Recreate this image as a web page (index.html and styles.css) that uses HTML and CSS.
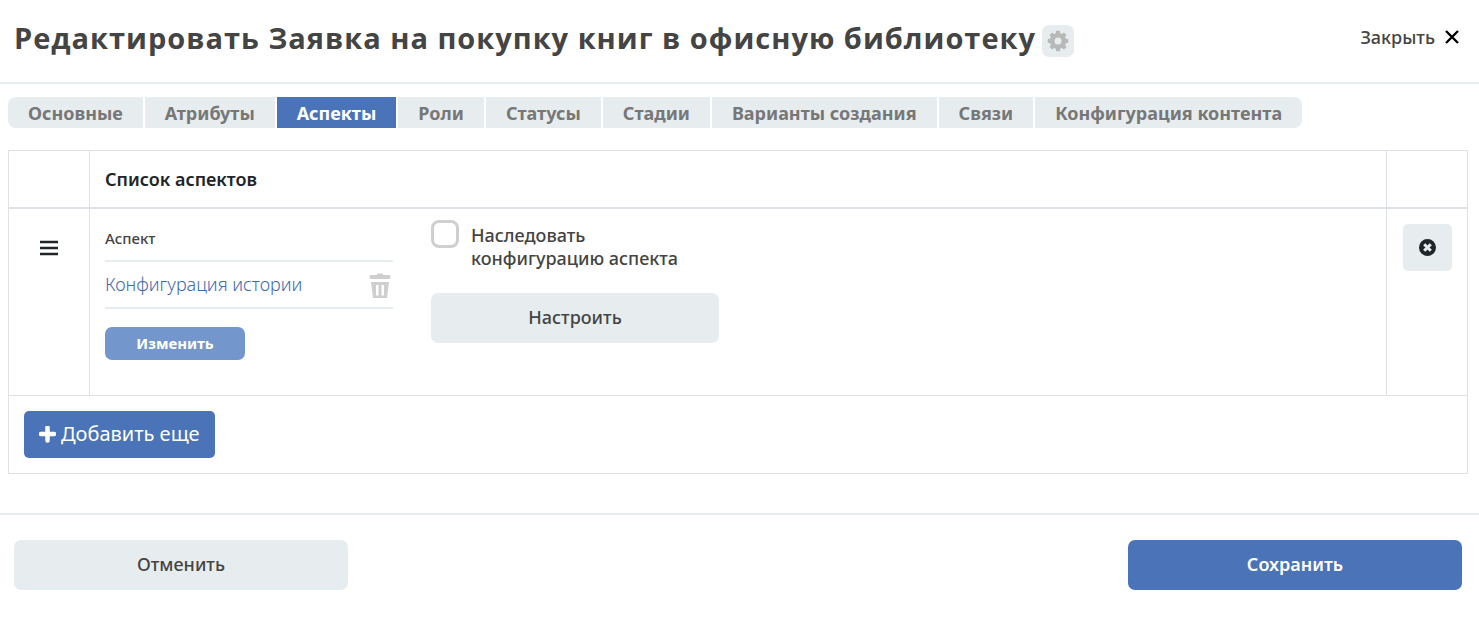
FILE: index.html
```html
<!DOCTYPE html>
<html lang="ru">
<head>
<meta charset="utf-8">
<meta name="viewport" content="width=device-width, initial-scale=1">
<title>Редактировать Заявка на покупку книг в офисную библиотеку</title>
<link rel="stylesheet" href="styles.css">
</head>
<body>
<header class="header">
  <h1 class="title">Редактировать Заявка на покупку книг в офисную библиотеку</h1>
  <button class="gear" type="button" aria-label="Настройки">
    <svg width="22" height="22" viewBox="-11 -11 22 22"><path fill="#b8b8b8" fill-rule="evenodd" d="M-1.8-10.3H1.8L2.4-7.6 3.8-7 6-8.5 8.5-6 7-3.8 7.6-2.4 10.3-1.8V1.8L7.6 2.4 7 3.8 8.5 6 6 8.5 3.8 7 2.4 7.6 1.8 10.3H-1.8L-2.4 7.6-3.8 7-6 8.5-8.5 6-7 3.8-7.6 2.4-10.3 1.8V-1.8L-7.6-2.4-7-3.8-8.5-6-6-8.5-3.8-7-2.4-7.6ZM0-3.5A3.5 3.5 0 1 0 0 3.5 3.5 3.5 0 1 0 0-3.5Z"/></svg>
  </button>
  <button class="close" type="button">Закрыть
    <svg width="14" height="14" viewBox="0 0 14 14"><path d="M1 1 13 13M13 1 1 13" stroke="#000" stroke-width="2.4" fill="none"/></svg>
  </button>
</header>
<main class="content">
  <nav class="tabs">
    <a class="tab" href="#main">Основные</a>
    <a class="tab" href="#attributes">Атрибуты</a>
    <a class="tab tab-active" href="#aspects" aria-current="page">Аспекты</a>
    <a class="tab" href="#roles">Роли</a>
    <a class="tab" href="#statuses">Статусы</a>
    <a class="tab" href="#stages">Стадии</a>
    <a class="tab" href="#variants">Варианты создания</a>
    <a class="tab" href="#links">Связи</a>
    <a class="tab" href="#content">Конфигурация контента</a>
  </nav>
  <table class="grid">
    <thead>
      <tr><th class="side"></th><th>Список аспектов</th><th class="side"></th></tr>
    </thead>
    <tbody>
      <tr>
        <td class="side handle">
          <svg width="18" height="16" viewBox="0 0 18 16"><path d="M0 2H18M0 8H18M0 14H18" stroke="#212529" stroke-width="2.6"/></svg>
        </td>
        <td>
          <div class="fields">
            <div class="field">
              <div class="label">Аспект</div>
              <div class="value">
                <a class="link" href="#history">Конфигурация истории</a>
                <button class="trash" type="button" aria-label="Удалить">
                  <svg width="22" height="26" viewBox="0 0 22 26"><path fill="#cfcfcf" fill-rule="evenodd" d="M8 2V1.500Q8 .5 9 .5H13Q14 .5 14 1.500V2H20Q21.300 2 21.300 3.300V6H.7V3.300Q.7 2 2 2ZM2 9H20L18 25H4ZM7 12V22.500H9.500V12ZM12.500 12V22.500H15V12Z"/></svg>
                </button>
              </div>
              <button class="change" type="button">Изменить</button>
            </div>
            <div class="field">
              <label class="inherit"><input class="check" type="checkbox"><span>Наследовать конфигурацию аспекта</span></label>
              <button class="btn configure" type="button">Настроить</button>
            </div>
          </div>
        </td>
        <td class="side">
          <button class="remove" type="button" aria-label="Удалить строку">
            <svg width="17" height="17" viewBox="0 0 18 18"><circle cx="9" cy="9" r="9" fill="#212529"/><path d="M5.500 5.500 12.500 12.500M12.500 5.500 5.500 12.500" stroke="#e7edef" stroke-width="3.200"/></svg>
          </button>
        </td>
      </tr>
    </tbody>
    <tfoot>
      <tr><td colspan="3">
        <button class="add" type="button"><svg width="17" height="17" viewBox="0 0 17 17"><path d="M8.500 1.500V14.500M2 8H15" stroke="#fff" stroke-width="4.500" stroke-linecap="round"/></svg>Добавить еще</button>
      </td></tr>
    </tfoot>
  </table>
</main>
<footer class="footer">
  <button class="btn action" type="button">Отменить</button>
  <button class="btn action primary" type="button">Сохранить</button>
</footer>
</body>
</html>
```
FILE: styles.css
```css
* { box-sizing: border-box; }
body {
  margin: 0;
  background: #fff;
  color: #444;
  font: 500 18px/24px "Noto Sans", "Open Sans", sans-serif;
}
button {
  border: 0;
  padding: 0;
  background: none;
  color: inherit;
  font: inherit;
  cursor: pointer;
}
svg { display: block; }
a { text-decoration: none; }
.header {
  display: flex;
  align-items: flex-start;
  min-height: 84px;
  padding: 16px 20px 0 14px;
  border-bottom: 2px solid #e7edef;
}
.title {
  margin: 0;
  font-family: "Open Sans", sans-serif;
  font-size: 29px;
  line-height: 44px;
  font-weight: 700;
  letter-spacing: 1px;
}
.gear {
  display: grid;
  place-items: center;
  width: 32px;
  height: 32px;
  margin: 9px 0 0 6px;
  border-radius: 7px;
  background: #e7edef;
}
.close {
  display: flex;
  align-items: center;
  gap: 10px;
  margin: 9px 0 0 auto;
}
.content { padding: 13px 11px 39px 8px; }
.tabs { display: flex; gap: 2px; }
.tab {
  padding: 4px 20px 3px;
  background: #e7edef;
  color: #777;
  font-weight: 700;
}
.tab:first-child { border-radius: 8px 0 0 8px; }
.tab:last-child { border-radius: 0 8px 8px 0; }
.tab-active { background: #4b74b8; color: #fff; }
.grid {
  width: 100%;
  margin-top: 22px;
  border-collapse: collapse;
  table-layout: fixed;
  border: 1px solid #dee2e6;
}
.grid th, .grid td {
  padding: 15px;
  border: 1px solid #dee2e6;
  vertical-align: top;
  text-align: left;
}
.grid th {
  height: 57px;
  padding-top: 16px;
  border-bottom-width: 2px;
  color: #212529;
  font-weight: 600;
}
.grid .side { width: 81px; }
.grid .handle { padding: 31px 31px 0; }
.fields {
  display: flex;
  gap: 38px;
  min-height: 156px;
}
.field { width: 288px; }
.label {
  padding: 2px 0 10px;
  border-bottom: 2px solid #e7edef;
  font-size: 15px;
}
.value {
  display: flex;
  align-items: center;
  justify-content: space-between;
  height: 47px;
  padding-right: 2px;
  border-bottom: 2px solid #e7edef;
}
.link { color: #3f6ab2; font-weight: 300; }
.trash { margin-top: 4px; }
.change {
  width: 140px;
  height: 33px;
  margin-top: 18px;
  border-radius: 7px;
  background: #7396cd;
  color: #fff;
  font-size: 15px;
  font-weight: 700;
}
.inherit {
  display: flex;
  align-items: flex-start;
  gap: 12px;
  width: 260px;
  line-height: 23px;
}
.check {
  appearance: none;
  flex: none;
  width: 28px;
  height: 28px;
  margin: -4px 0 0;
  border: 3px solid #cfcfcf;
  border-radius: 8px;
  background: #fff;
}
.btn {
  height: 50px;
  padding-bottom: 2px;
  border-radius: 7px;
  background: #e7edef;
}
.configure { width: 100%; margin-top: 23px; }
.remove {
  display: grid;
  place-items: center;
  width: 49px;
  height: 47px;
  margin-left: auto;
  border-radius: 5px;
  background: #e7edef;
}
.add {
  display: flex;
  align-items: center;
  gap: 5px;
  height: 47px;
  padding: 0 15px;
  border-radius: 5px;
  background: #4b74b8;
  color: #fff;
  font-size: 20px;
  font-weight: 400;
}
.footer {
  display: flex;
  justify-content: space-between;
  padding: 25px 17px 33px 14px;
  border-top: 2px solid #e7edef;
}
.action { width: 334px; }
.primary { background: #4b74b8; color: #fff; font-weight: 600; }
```
